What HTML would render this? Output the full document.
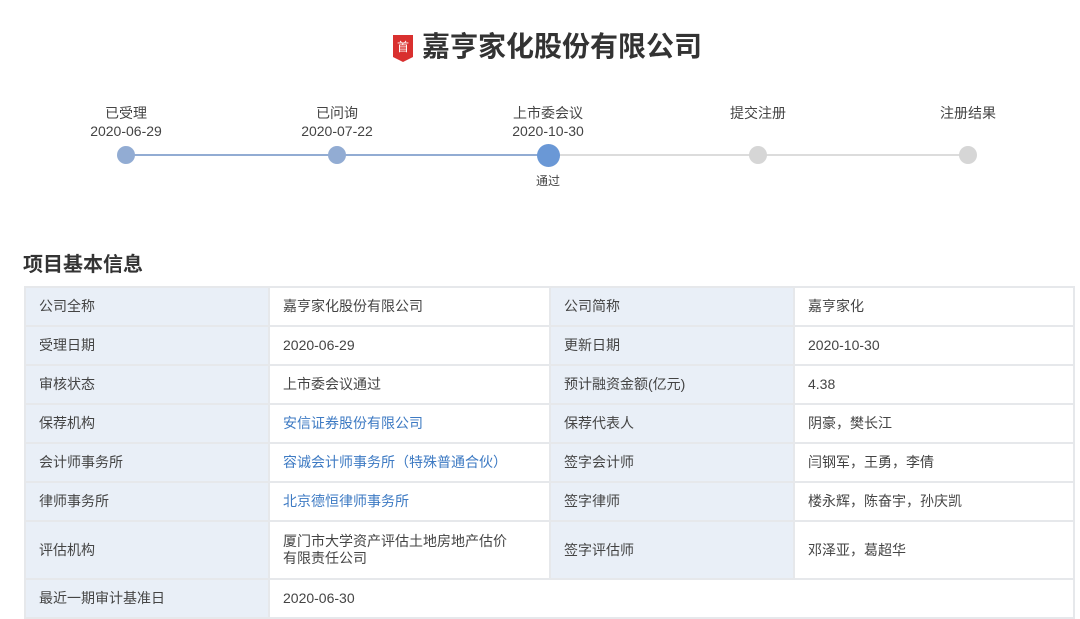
<!DOCTYPE html>
<html><head><meta charset="utf-8"><style>
body{margin:0;width:1080px;height:619px;background:#fff;font-family:"Liberation Sans","Noto Sans CJK SC",sans-serif;color:#333;position:relative;overflow:hidden}
.a{position:absolute}
.t{font-size:14px;color:#444;text-align:center;width:140px;line-height:18px}
.dot{position:absolute;width:18px;height:18px;border-radius:50%;top:146px}
table{position:absolute;left:24px;top:286px;width:1051px;border-collapse:collapse;font-size:14px;color:#444}
td{border:2px solid #e6e8eb;padding:0 0 0 13px;height:37px;line-height:17px}
td.l{background:#e9eff7}
a{color:#3d7ac3;text-decoration:none}
</style></head><body>
<svg class="a" style="left:392px;top:34px" width="22" height="29" viewBox="0 0 22 29"><path d="M1 1h20v22l-10 5-10-5z" fill="#d9302f"/><text x="11" y="17" font-size="12" fill="#fff" text-anchor="middle" font-family="Noto Sans CJK SC">首</text></svg>
<div class="a" style="left:422px;top:29px;font-size:28px;font-weight:bold;color:#333;line-height:36px">嘉亨家化股份有限公司</div>

<div class="a" style="left:126px;top:154px;width:422px;height:2px;background:#92acd3"></div>
<div class="a" style="left:548px;top:154px;width:420px;height:2px;background:#dcdcdc"></div>
<div class="dot" style="left:117px;background:#92acd3"></div>
<div class="dot" style="left:328px;background:#92acd3"></div>
<div class="dot" style="left:537px;top:144px;width:23px;height:23px;background:#6a98d6"></div>
<div class="dot" style="left:749px;background:#d6d6d6"></div>
<div class="dot" style="left:959px;background:#d6d6d6"></div>

<div class="a t" style="left:56px;top:104px">已受理<br>2020-06-29</div>
<div class="a t" style="left:267px;top:104px">已问询<br>2020-07-22</div>
<div class="a t" style="left:478px;top:104px">上市委会议<br>2020-10-30</div>
<div class="a t" style="left:688px;top:104px">提交注册</div>
<div class="a t" style="left:898px;top:104px">注册结果</div>
<div class="a" style="left:508px;top:172px;width:80px;text-align:center;font-size:12px;color:#444">通过</div>

<div class="a" style="left:23px;top:251px;font-size:20px;font-weight:bold;color:#333;line-height:28px">项目基本信息</div>

<table>
<colgroup><col style="width:244px"><col style="width:281px"><col style="width:244px"><col></colgroup>
<tr><td class="l">公司全称</td><td>嘉亨家化股份有限公司</td><td class="l">公司简称</td><td>嘉亨家化</td></tr>
<tr><td class="l">受理日期</td><td>2020-06-29</td><td class="l">更新日期</td><td>2020-10-30</td></tr>
<tr><td class="l">审核状态</td><td>上市委会议通过</td><td class="l">预计融资金额(亿元)</td><td>4.38</td></tr>
<tr><td class="l">保荐机构</td><td><a>安信证券股份有限公司</a></td><td class="l">保荐代表人</td><td>阴豪，樊长江</td></tr>
<tr><td class="l">会计师事务所</td><td><a>容诚会计师事务所（特殊普通合伙）</a></td><td class="l">签字会计师</td><td>闫钢军，王勇，李倩</td></tr>
<tr><td class="l">律师事务所</td><td><a>北京德恒律师事务所</a></td><td class="l">签字律师</td><td>楼永辉，陈奋宇，孙庆凯</td></tr>
<tr><td class="l" style="height:56px">评估机构</td><td>厦门市大学资产评估土地房地产估价<br>有限责任公司</td><td class="l">签字评估师</td><td>邓泽亚，葛超华</td></tr>
<tr><td class="l">最近一期审计基准日</td><td colspan="3">2020-06-30</td></tr>
</table>
</body></html>
